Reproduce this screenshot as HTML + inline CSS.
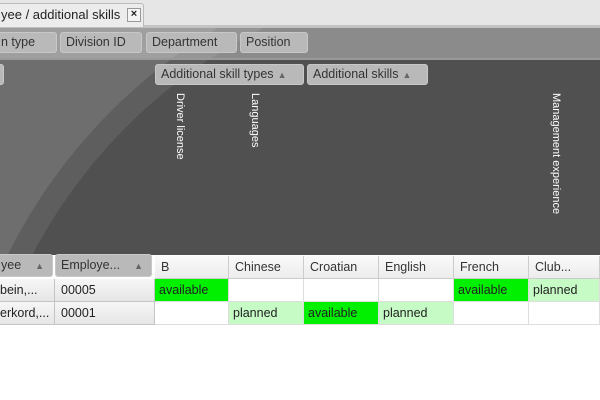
<!DOCTYPE html>
<html><head><style>
*{box-sizing:border-box;margin:0;padding:0}
body{width:600px;height:400px;overflow:hidden;background:#fff;font-family:"Liberation Sans",sans-serif;font-size:12.5px;color:#222;position:relative}
.a{position:absolute}
.btn{position:absolute;height:21px;background:#b9b9b9;border:1px solid #c8c8c8;border-radius:3px;color:#333;line-height:19px;padding-left:5px;white-space:nowrap;overflow:hidden}
.tri{font-size:9px;color:#666;margin-left:4px}
.vt{position:absolute;writing-mode:vertical-rl;color:#fff;font-size:11px;top:93px;font-family:"Liberation Sans",sans-serif}
.c{position:absolute;height:23px;line-height:22px;padding-left:6px;border-right:1px solid #ddd;border-bottom:1px solid #ddd;white-space:nowrap;overflow:hidden}
.h{background:linear-gradient(#fafafa,#ececec);border-right:1px solid #ccc;border-bottom:1px solid #ccc;color:#333}
.g{background:#00f000}
.p{background:#c6fbc6}
.r{background:linear-gradient(#f6f6f6,#e6e6e6);border-right:1px solid #c4c4c4;border-bottom:1px solid #c4c4c4}
</style></head><body>
<div class="a" style="left:0;top:0;width:600px;height:27px;background:#e6e6e6;border-bottom:2px solid #c4c4c4"></div>
<div class="a" style="left:-2px;top:3px;width:146px;height:24px;background:#ececec;border:1px solid #bbb;border-bottom:none;border-radius:0 3px 0 0;padding-left:2px;line-height:22px;font-size:13px;color:#222;overflow:hidden;white-space:nowrap">yee / additional skills</div>
<div class="a" style="left:127px;top:8px;width:14px;height:14px;border:1px solid #999;background:#f4f4f4;font-size:11px;line-height:11px;text-align:center;font-weight:bold">×</div>
<svg class="a" style="left:0;top:27px" width="600" height="228">
<rect width="600" height="228" fill="#6e6e6e"/>
<circle cx="500" cy="473" r="550" fill="#5e5e5e"/>
<circle cx="500" cy="473" r="528" fill="#505050"/>
<rect width="600" height="32" fill="#fff" opacity="0.34"/>
<rect y="0" width="600" height="1" fill="#c0c0c0"/>
<rect y="31" width="600" height="2" fill="#999"/>
</svg>
<div class="btn" style="left:-5px;top:32px;width:62px">n type</div>
<div class="btn" style="left:60px;top:32px;width:82px">Division ID</div>
<div class="btn" style="left:146px;top:32px;width:91px">Department</div>
<div class="btn" style="left:240px;top:32px;width:68px">Position</div>
<div class="btn" style="left:-5px;top:64px;width:9px"></div>
<div class="btn" style="left:155px;top:64px;width:149px">Additional skill types<span class="tri">▲</span></div>
<div class="btn" style="left:307px;top:64px;width:121px">Additional skills<span class="tri">▲</span></div>
<div class="vt" style="left:174px">Driver license</div>
<div class="vt" style="left:249px">Languages</div>
<div class="vt" style="left:550px">Management experience</div>
<div class="btn" style="left:-5px;top:254px;width:58px;height:23px;line-height:21px">yee<span class="tri" style="margin-left:14px">▲</span></div>
<div class="btn" style="left:55px;top:254px;width:97px;height:23px;line-height:21px">Employe...<span class="tri" style="margin-left:14px">▲</span></div>
<div class="c h" style="left:155px;top:256px;width:74px">B</div>
<div class="c h" style="left:229px;top:256px;width:75px">Chinese</div>
<div class="c h" style="left:304px;top:256px;width:75px">Croatian</div>
<div class="c h" style="left:379px;top:256px;width:75px">English</div>
<div class="c h" style="left:454px;top:256px;width:75px">French</div>
<div class="c h" style="left:529px;top:256px;width:71px">Club...</div>
<div class="c r" style="left:0;top:279px;width:55px;padding-left:0">bein,...</div>
<div class="c r" style="left:55px;top:279px;width:100px">00005</div>
<div class="c r" style="left:0;top:302px;width:55px;padding-left:0">erkord,...</div>
<div class="c r" style="left:55px;top:302px;width:100px">00001</div>
<div class="c g" style="left:155px;top:279px;width:74px;padding-left:4px">available</div>
<div class="c" style="left:229px;top:279px;width:75px"></div>
<div class="c" style="left:304px;top:279px;width:75px"></div>
<div class="c" style="left:379px;top:279px;width:75px"></div>
<div class="c g" style="left:454px;top:279px;width:75px;padding-left:4px">available</div>
<div class="c p" style="left:529px;top:279px;width:71px;padding-left:4px">planned</div>
<div class="c" style="left:155px;top:302px;width:74px"></div>
<div class="c p" style="left:229px;top:302px;width:75px;padding-left:4px">planned</div>
<div class="c g" style="left:304px;top:302px;width:75px;padding-left:4px">available</div>
<div class="c p" style="left:379px;top:302px;width:75px;padding-left:4px">planned</div>
<div class="c" style="left:454px;top:302px;width:75px"></div>
<div class="c" style="left:529px;top:302px;width:71px"></div>
</body></html>
